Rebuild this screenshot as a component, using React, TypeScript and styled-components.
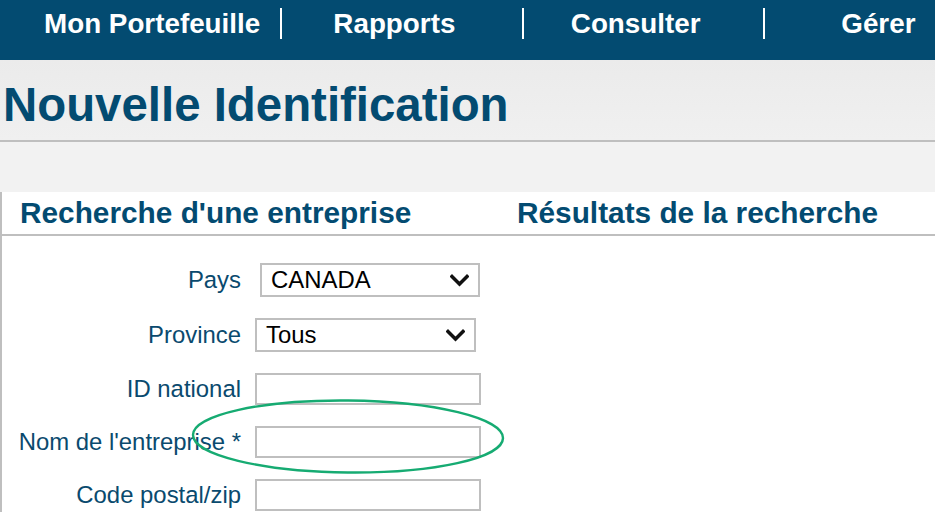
import * as React from "react"
import styled, { createGlobalStyle } from "styled-components"

const palette = {
  navy: "#034b71",
  line: "#bfbfbf",
  label: "#0a4a6e",
}

const GlobalStyle = createGlobalStyle`
  html, body {
    margin: 0;
    padding: 0;
    background: #ffffff;
    font-family: "Liberation Sans", Arial, sans-serif;
  }
`

const Page = styled.div`
  width: 935px;
  height: 512px;
  overflow: hidden;
  position: relative;
  background: #ffffff;
`

const NavBar = styled.div`
  height: 60px;
  background-color: ${palette.navy};
  display: flex;
  align-items: flex-start;
  padding-top: 8px;
  box-sizing: border-box;
`

const NavItem = styled.div<{ $width: number; $pad: number }>`
  width: ${(p) => p.$width}px;
  height: 31px;
  box-sizing: border-box;
  padding-left: ${(p) => p.$pad}px;
  display: flex;
  align-items: center;
  color: #ffffff;
  font-weight: bold;
  font-size: 27.8px;
  white-space: nowrap;
`

const NavSep = styled.div`
  width: 2px;
  height: 31px;
  background: #ffffff;
`

const TitleBand = styled.div`
  height: 80px;
  box-sizing: border-box;
  background: linear-gradient(#ebebeb, #f0f0f0);
  display: flex;
  align-items: center;
  padding: 9px 0 0 3px;
`

const Rule = styled.div`
  height: 2px;
  background: ${palette.line};
`

const Title = styled.h1`
  margin: 0;
  color: ${palette.navy};
  font-size: 47.4px;
  font-weight: bold;
  line-height: 1;
`

const Spacer = styled.div`
  height: 50px;
  background: #f2f2f2;
`

const Panel = styled.div`
  border-left: 2px solid ${palette.line};
  background: #ffffff;
  height: 320px;
`

const HeaderRow = styled.div`
  display: grid;
  grid-template-columns: 497px 1fr;
  height: 42px;
  border-bottom: 2px solid ${palette.line};
`

const SectionTitle = styled.h2`
  margin: 0;
  padding-left: 18px;
  padding-top: 6px;
  color: ${palette.navy};
  font-size: 29.8px;
  font-weight: bold;
  line-height: 1;
  white-space: nowrap;
`

const Form = styled.div`
  display: grid;
  grid-template-columns: 239px auto;
  row-gap: 21px;
  padding-top: 27px;
  align-items: center;
  justify-items: start;
`

const Label = styled.label`
  justify-self: end;
  color: ${palette.label};
  font-size: 23.9px;
  white-space: nowrap;
`

const Field = styled.div<{ $offset?: number }>`
  margin-left: ${(p) => p.$offset ?? 14}px;
`

const SelectBox = styled.div<{ $width: number }>`
  width: ${(p) => p.$width}px;
  height: 34px;
  box-sizing: border-box;
  border: 2px solid ${palette.line};
  display: flex;
  align-items: center;
  justify-content: space-between;
  padding: 0 9px 0 9px;
  font-size: 23.9px;
  color: #000000;
`

const TextBox = styled.input`
  display: block;
  width: 226px;
  height: 32px;
  box-sizing: border-box;
  border: 2px solid ${palette.line};
  background: #ffffff;
  padding: 0;
  margin: 0;
  outline: none;
`

const Annotation = styled.svg`
  position: absolute;
  left: 190px;
  top: 397px;
  pointer-events: none;
`

const Chevron = () => (
  <svg width="19" height="13" viewBox="0 0 19 13">
    <path d="M2 2.5 L9.5 10 L17 2.5" fill="none" stroke="#111" strokeWidth="3.4" strokeLinecap="square" />
  </svg>
)

const rows: { label: string; kind: "select" | "input"; value?: string; width?: number; offset?: number }[] = [
  { label: "Pays", kind: "select", value: "CANADA", width: 220, offset: 19 },
  { label: "Province", kind: "select", value: "Tous", width: 221 },
  { label: "ID national", kind: "input" },
  { label: "Nom de l'entreprise *", kind: "input" },
  { label: "Code postal/zip", kind: "input" },
]

const App: React.FC = () => {
  return (
    <Page>
      <GlobalStyle />
      <NavBar>
        <NavItem $width={281} $pad={44}>Mon Portefeuille</NavItem>
        <NavSep />
        <NavItem $width={240} $pad={51}>Rapports</NavItem>
        <NavSep />
        <NavItem $width={240} $pad={47}>Consulter</NavItem>
        <NavSep />
        <NavItem $width={170} $pad={76}>Gérer</NavItem>
      </NavBar>

      <TitleBand>
        <Title>Nouvelle Identification</Title>
      </TitleBand>
      <Rule />
      <Spacer />

      <Panel>
        <HeaderRow>
          <SectionTitle>Recherche d'une entreprise</SectionTitle>
          <SectionTitle>Résultats de la recherche</SectionTitle>
        </HeaderRow>
        <Form>
          {rows.map((r) => (
            <React.Fragment key={r.label}>
              <Label>{r.label}</Label>
              <Field $offset={r.offset}>
                {r.kind === "select" ? (
                  <SelectBox $width={r.width ?? 220}>
                    <span>{r.value}</span>
                    <Chevron />
                  </SelectBox>
                ) : (
                  <TextBox type="text" />
                )}
              </Field>
            </React.Fragment>
          ))}
        </Form>
      </Panel>

      <Annotation width="320" height="82" viewBox="0 0 320 82">
        <ellipse cx="158" cy="39.5" rx="155" ry="36" fill="none" stroke="#16ab72" strokeWidth="2.4" transform="rotate(0.6 158 39.5)" />
      </Annotation>
    </Page>
  )
}

export default App
